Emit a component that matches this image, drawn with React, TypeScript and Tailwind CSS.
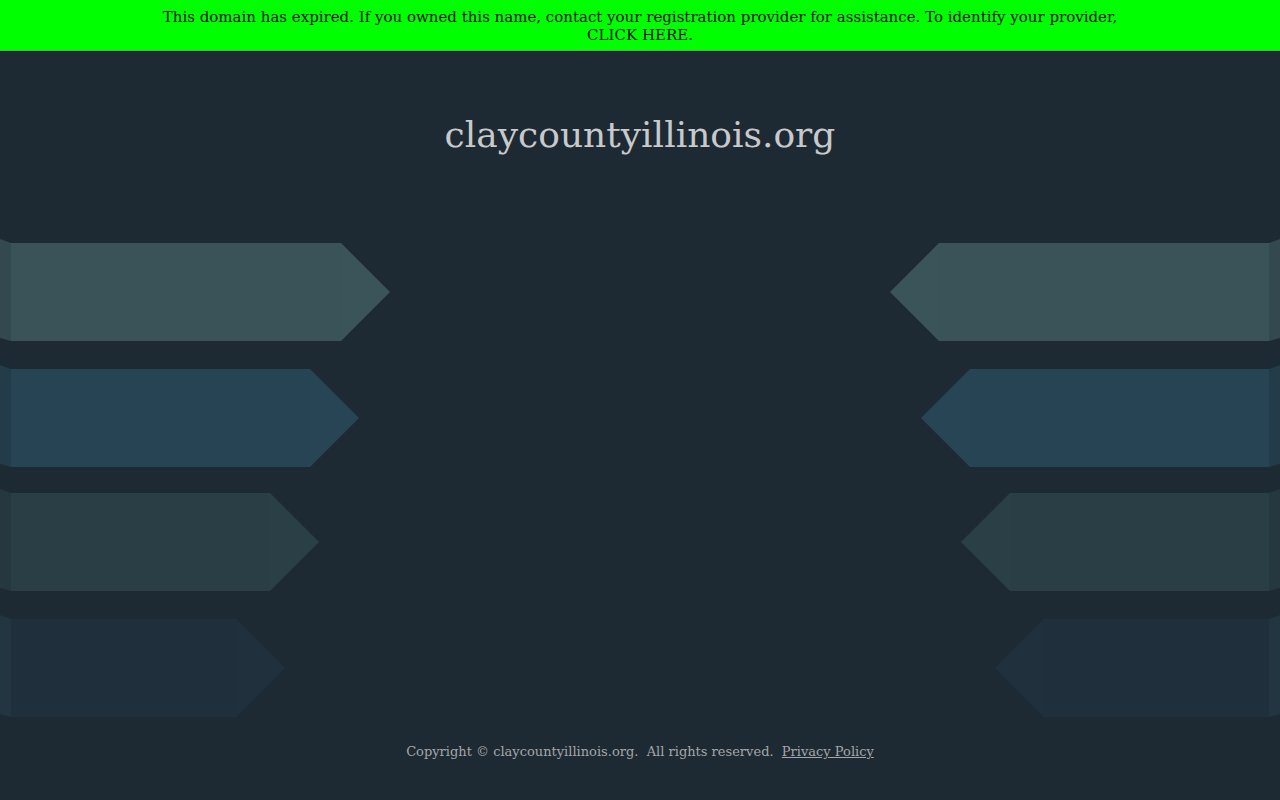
import React from 'react';

const rows = [
  { w: 390, body: '#3a5358', tip: '#3b5459', end: '#33494f', mt: 'mt-0' },
  { w: 359, body: '#264453', tip: '#274554', end: '#223c4a', mt: 'mt-[24px]' },
  { w: 319, body: '#2a3e46', tip: '#2b3f47', end: '#26383f', mt: 'mt-[22px]' },
  { w: 285, body: '#1f303c', tip: '#20313d', end: '#233540', mt: 'mt-[24px]' },
];

const Arrow = ({ w, body, tip, end, flip }: { w: number; body: string; tip: string; end: string; flip?: boolean }) => {
  const b = w - 49;
  return (
    <svg width={w} height={102} viewBox={`0 0 ${w} 102`} className={flip ? 'block -scale-x-100' : 'block'}>
      <polygon points="0,0 11,4 11,102 0,99" fill={end} />
      <rect x={11} y={4} width={b - 11} height={98} fill={body} />
      <polygon points={`${b},4 ${w},53 ${b},102`} fill={tip} />
    </svg>
  );
};

const App = () => {
  return (
    <div className="min-h-screen bg-[#1e2a33]" style={{ fontFamily: '"DejaVu Serif", serif' }}>
      <div className="h-[51px] bg-[#00ff00] border-b border-[#5fa85f] pt-[8px]">
        <p className="mx-auto w-[990px] text-center text-[15px] leading-[18px] text-[#111]">
          This domain has expired. If you owned this name, contact your registration provider for assistance. To identify your provider, CLICK HERE.
        </p>
      </div>

      <div className="h-[188px] flex justify-center pt-[60px]">
        <h1 className="text-[36px] leading-[48px] text-[#c7c9cb]">claycountyillinois.org</h1>
      </div>

      <div className="flex flex-col">
        {rows.map((r, i) => (
          <div key={i} className={`flex justify-between ${r.mt}`}>
            <Arrow {...r} />
            <Arrow {...r} flip />
          </div>
        ))}
      </div>

      <div className="pt-[26px] text-center text-[13px] leading-[18px] text-[#a3a7aa]">
        Copyright © claycountyillinois.org.&nbsp; All rights reserved.&nbsp;{' '}
        <a href="#" className="underline">Privacy Policy</a>
      </div>
    </div>
  );
};

export default App;
